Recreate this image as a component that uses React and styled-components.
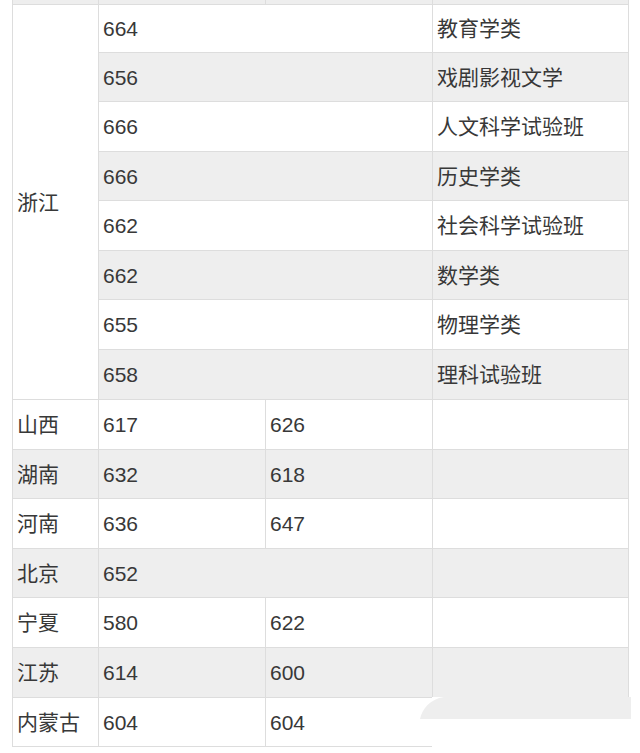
import React from "react";
import styled, { createGlobalStyle } from "styled-components";

const Global = createGlobalStyle`
  html, body {
    margin: 0;
    padding: 0;
    background: #ffffff;
    overflow: hidden;
  }
  body {
    font-family: "Liberation Sans", "Noto Sans CJK SC", sans-serif;
  }
`;

const Page = styled.div`
  width: 640px;
  height: 753px;
  overflow: hidden;
  background: #ffffff;
`;

const Grid = styled.div`
  display: grid;
  width: max-content;
  grid-template-columns: 85px 166px 166px 195px;
  grid-template-rows: 48px 47px 48px 49px 48px 49px 48px 49px 49px 49px 48px 49px 48px 49px 49px 48px;
  gap: 1px;
  padding: 1px;
  margin: -45px 0 0 12px;
  background: #dddddd;
`;

const Cell = styled.div`
  position: relative;
  display: flex;
  align-items: center;
  padding-left: 4px;
  background: ${(p) => (p.$gray ? "#eeeeee" : "#ffffff")};
  color: #383838;
  font-size: 21px;
  line-height: 1;
  white-space: nowrap;
  grid-column: ${(p) => (p.$cols ? `span ${p.$cols}` : "auto")};
  grid-row: ${(p) => (p.$rows ? `span ${p.$rows}` : "auto")};
`;

const Erase = styled.div`
  position: absolute;
  top: -1px;
  left: -1px;
  right: -1px;
  bottom: -1px;
  background: #ffffff;
`;

const Blob = styled.svg`
  position: absolute;
  top: 0;
  left: -12px;
  overflow: visible;
`;

const zhejiang = [
  ["664", "教育学类"],
  ["656", "戏剧影视文学"],
  ["666", "人文科学试验班"],
  ["666", "历史学类"],
  ["662", "社会科学试验班"],
  ["662", "数学类"],
  ["655", "物理学类"],
  ["658", "理科试验班"],
];

const others = [
  ["山西", "617", "626"],
  ["湖南", "632", "618"],
  ["河南", "636", "647"],
  ["北京", "652", null],
  ["宁夏", "580", "622"],
  ["江苏", "614", "600"],
  ["内蒙古", "604", "604"],
];

export default function App() {
  const cells = [];
  // partially visible previous row (grey)
  cells.push(<Cell key="p1" $gray />);
  cells.push(<Cell key="p2" $gray />);
  cells.push(<Cell key="p3" $gray />);
  cells.push(<Cell key="p4" $gray />);

  zhejiang.forEach(([score, major], i) => {
    const gray = i % 2 === 1;
    if (i === 0) {
      cells.push(
        <Cell key="zj" $rows={8}>
          浙江
        </Cell>
      );
    }
    cells.push(
      <Cell key={`zs${i}`} $gray={gray} $cols={2}>
        {score}
      </Cell>
    );
    cells.push(
      <Cell key={`zm${i}`} $gray={gray}>
        {major}
      </Cell>
    );
  });

  others.forEach(([prov, a, b], i) => {
    const gray = i % 2 === 1;
    const last = i === others.length - 1;
    cells.push(
      <Cell key={`op${i}`} $gray={gray}>
        {prov}
      </Cell>
    );
    if (b === null) {
      cells.push(
        <Cell key={`oa${i}`} $gray={gray} $cols={2}>
          {a}
        </Cell>
      );
    } else {
      cells.push(
        <Cell key={`oa${i}`} $gray={gray}>
          {a}
        </Cell>
      );
      cells.push(
        <Cell key={`ob${i}`} $gray={gray}>
          {b}
        </Cell>
      );
    }
    cells.push(
      <Cell key={`oc${i}`} $gray={gray}>
        {last && (
          <Erase>
            <Blob width="211" height="22" viewBox="0 0 211 22">
              <path
                d="M24 0 H211 V22 H0 C2 12 10 2 24 0 Z"
                fill="#eeeeee"
              />
            </Blob>
          </Erase>
        )}
      </Cell>
    );
  });

  return (
    <Page>
      <Global />
      <Grid>{cells}</Grid>
    </Page>
  );
}
